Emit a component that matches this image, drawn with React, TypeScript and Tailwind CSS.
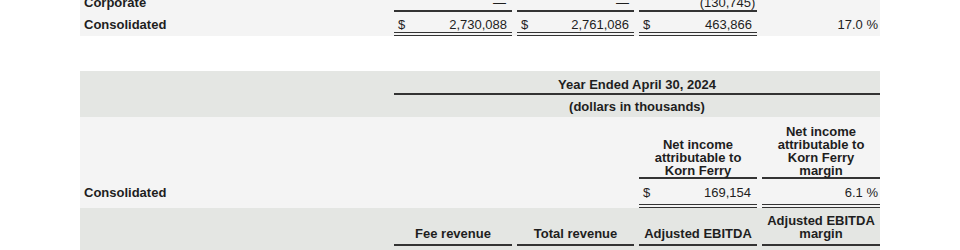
import React from "react";

const grid = "grid grid-cols-[309px_118px_117px_118px_118px] gap-x-[5px]";
const line = "border-[#333]";

function Money({ v }: { v: string }) {
  return (
    <div className={`pt-[5px] pl-[4px] pr-[5px] flex justify-between border-b-4 border-double ${line}`}>
      <span>$</span>
      <span>{v}</span>
    </div>
  );
}

function Head({ lines, pt, pb }: { lines: string[]; pt: string; pb: string }) {
  return (
    <div className={`flex flex-col justify-end items-center text-center font-bold leading-[13px] border-b-2 ${line} ${pt} ${pb}`}>
      {lines.map((l) => (
        <span key={l}>{l}</span>
      ))}
    </div>
  );
}

export default function App() {
  return (
    <div className="w-[960px] h-[250px] overflow-hidden bg-white font-['Liberation_Sans',Arial,sans-serif] text-[13px] leading-[15px] text-[#1e1e1e]">
      <div className="ml-[80px] w-[800px] -mt-[10px]">
        {/* Table 1 (continued) */}
        <div className={`${grid} bg-[#f4f4f4]`}>
          <div className="pt-[5px] pl-[4px] font-bold">Corporate</div>
          <div className={`pt-[5px] pr-[6px] text-right border-b-2 ${line}`}>—</div>
          <div className={`pt-[5px] pr-[5px] text-right border-b-2 ${line}`}>—</div>
          <div className={`pt-[5px] pr-[6px] text-right border-b-2 ${line}`}>
            (130,745<span className="inline-block w-0">)</span>
          </div>
          <div />

          <div className="pt-[5px] pl-[4px] font-bold">Consolidated</div>
          <Money v="2,730,088" />
          <Money v="2,761,086" />
          <Money v="463,866" />
          <div className="pt-[5px] pr-[2px] text-right">17.0 %</div>
        </div>

        {/* Table 2 */}
        <div className="mt-[35px]">
          <div className={`${grid} bg-[#e4e6e3]`}>
            <div />
            <div className={`col-span-4 text-center font-bold pt-[6px] pb-[1px] border-b-2 ${line}`}>
              Year Ended April 30, 2024
            </div>
            <div />
            <div className="col-span-4 text-center font-bold pt-[4px] pb-[3px]">
              (dollars in thousands)
            </div>
          </div>

          <div className={`${grid} bg-[#f4f4f4]`}>
            <div />
            <div />
            <div />
            <Head lines={["Net income", "attributable to", "Korn Ferry"]} pt="pt-[8px]" pb="pb-0" />
            <Head lines={["Net income", "attributable to", "Korn Ferry", "margin"]} pt="pt-[8px]" pb="pb-0" />

            <div className="pt-[6px] pl-[4px] font-bold">Consolidated</div>
            <div />
            <div />
            <div className={`pt-[6px] pb-[4px] pl-[4px] pr-[6px] flex justify-between border-b-4 border-double ${line}`}>
              <span>$</span>
              <span>169,154</span>
            </div>
            <div className={`pt-[6px] pb-[4px] pr-[2px] text-right border-b-4 border-double ${line}`}>6.1 %</div>
          </div>

          <div className={`${grid} bg-[#e4e6e3] pb-[4px]`}>
            <div />
            <Head lines={["Fee revenue"]} pt="pt-[7px]" pb="pb-[4px]" />
            <Head lines={["Total revenue"]} pt="pt-[7px]" pb="pb-[4px]" />
            <Head lines={["Adjusted EBITDA"]} pt="pt-[7px]" pb="pb-[4px]" />
            <Head lines={["Adjusted EBITDA", "margin"]} pt="pt-[6px]" pb="pb-[4px]" />
          </div>
        </div>
      </div>
    </div>
  );
}
